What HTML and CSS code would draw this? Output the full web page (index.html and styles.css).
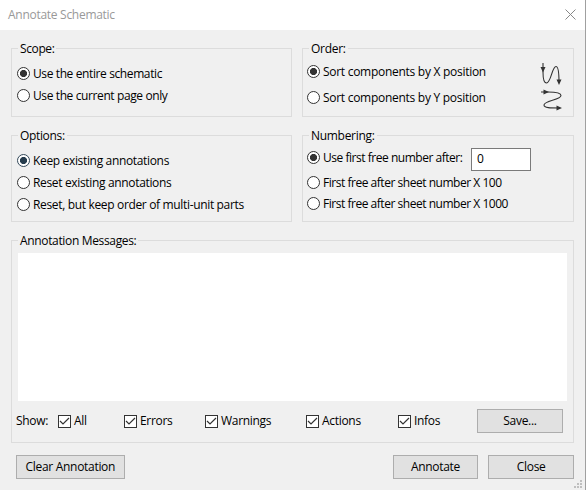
FILE: index.html
```html
<!DOCTYPE html>
<html lang="en">
<head>
<meta charset="utf-8">
<title>Annotate Schematic</title>
<link rel="stylesheet" href="styles.css">
</head>
<body>
<main class="dialog">
  <header class="titlebar">
    <h1>Annotate Schematic</h1>
    <svg class="close" width="11" height="11" viewBox="0 0 11 11"><path d="M.5 .5l10 10M10.5 .5l-10 10"/></svg>
  </header>
  <div class="content">
    <div class="columns">
      <section class="group scope">
        <h2>Scope:</h2>
        <div class="row"><i class="radio on"></i><span>Use the entire schematic</span></div>
        <div class="row"><i class="radio"></i><span>Use the current page only</span></div>
      </section>
      <section class="group order">
        <h2>Order:</h2>
        <div class="row"><i class="radio on"></i><span>Sort components by X position</span></div>
        <div class="row"><i class="radio"></i><span>Sort components by Y position</span></div>
        <svg class="arrows" width="24" height="50" viewBox="0 0 24 50">
          <path class="line" d="M3 1V10C3 17 4 21 6.500 21C11 21 12 4.500 16 4.500C18.500 4.500 19 10 19 20M1 30H8C16 30 21 30.500 21 33.500C21 38 4 38.500 4 43C4 46 10 46 20 46"/>
          <path d="M.5 5H5.500L3 10.500ZM16.500 17.500H21.500L19 23ZM3.500 27.500V32.500L9 30ZM16.500 43.500V48.500L22 46Z"/>
        </svg>
      </section>
    </div>
    <div class="columns second">
      <section class="group options">
        <h2>Options:</h2>
        <div class="row"><i class="radio on blue"></i><span>Keep existing annotations</span></div>
        <div class="row"><i class="radio"></i><span>Reset existing annotations</span></div>
        <div class="row"><i class="radio"></i><span>Reset, but keep order of multi-unit parts</span></div>
      </section>
      <section class="group numbering">
        <h2>Numbering:</h2>
        <div class="row first"><i class="radio on"></i><span>Use first free number after:</span><div class="field">0</div></div>
        <div class="row"><i class="radio"></i><span>First free after sheet number X 100</span></div>
        <div class="row"><i class="radio"></i><span>First free after sheet number X 1000</span></div>
      </section>
    </div>
    <section class="group messages">
      <h2>Annotation Messages:</h2>
      <div class="log"></div>
      <div class="filters">
        <span class="show">Show:</span>
        <div class="check"><svg width="13" height="13" viewBox="1 1 11 11"><path d="M2 6L5 9L11 3"/></svg><span>All</span></div>
        <div class="check"><svg width="13" height="13" viewBox="1 1 11 11"><path d="M2 6L5 9L11 3"/></svg><span>Errors</span></div>
        <div class="check"><svg width="13" height="13" viewBox="1 1 11 11"><path d="M2 6L5 9L11 3"/></svg><span>Warnings</span></div>
        <div class="check"><svg width="13" height="13" viewBox="1 1 11 11"><path d="M2 6L5 9L11 3"/></svg><span>Actions</span></div>
        <div class="check"><svg width="13" height="13" viewBox="1 1 11 11"><path d="M2 6L5 9L11 3"/></svg><span>Infos</span></div>
        <div class="button">Save...</div>
      </div>
    </section>
    <footer>
      <div class="button clear">Clear Annotation</div>
      <div class="button">Annotate</div>
      <div class="button">Close</div>
    </footer>
  </div>
  <svg class="grip" width="8" height="8" viewBox="0 0 8 8"><path d="M6 0h2v2h-2zM3 3h2v2h-2zM6 3h2v2h-2zM0 6h2v2h-2zM3 6h2v2h-2zM6 6h2v2h-2z"/></svg>
</main>
</body>
</html>
```
FILE: styles.css
```css
* { box-sizing: border-box; }
body { margin: 0; }
.dialog {
  position: relative;
  width: 586px;
  height: 490px;
  overflow: hidden;
  background: #f0f0f0;
  border-right: 1px solid #a0a0a0;
  color: #000;
  font: 12px/16px "Open Sans", "Noto Sans", sans-serif;
  letter-spacing: -0.3px;
  white-space: nowrap;
}
.titlebar {
  display: flex;
  justify-content: space-between;
  align-items: center;
  height: 30px;
  padding: 0 9px 2px 8px;
  background: #fff;
}
h1, h2 { margin: 0; font: inherit; }
h1 { padding-top: 2px; color: #999; letter-spacing: -0.28px; }
.close { fill: none; stroke: #888; }
.content { padding: 18px 11px 0; }
.columns { display: grid; grid-template-columns: 281px 272px; gap: 10px; height: 69px; }
.second { height: 87px; margin-top: 18px; }
.group {
  position: relative;
  display: flex;
  flex-direction: column;
  gap: 9px;
  border: 1px solid #dcdcdc;
  padding: 18px 5px 0;
}
.group h2 {
  position: absolute;
  top: -8px;
  left: 6px;
  padding: 0 2px;
  background: #f0f0f0;
}
.scope { letter-spacing: -0.39px; }
.options { letter-spacing: -0.34px; }
.order { gap: 13px; padding: 16px 4px 0; letter-spacing: -0.28px; }
.numbering { gap: 8px; padding: 15px 4px 0; }
.numbering .row { letter-spacing: -0.47px; }
.row { display: flex; align-items: center; gap: 3px; height: 13px; }
.first { margin-bottom: 4px; }
.radio {
  flex: none;
  width: 13px;
  height: 13px;
  border: 1px solid #333;
  border-radius: 50%;
  background: #fff;
}
.on { background: radial-gradient(circle, #333 3.2px, #fff 3.9px); }
.blue { border-color: #34495a; background: radial-gradient(circle, #263c4d 3.2px, #fff 3.9px); }
.arrows { position: absolute; left: 237px; top: 13px; fill: #333; }
.line { fill: none; stroke: #333; stroke-width: 1.1; }
.field {
  width: 60px;
  height: 23px;
  margin: 3px 0 0 auto;
  padding: 2px 5px;
  border: 1px solid #7a7a7a;
  background: #fff;
}
.first { width: 224px; }
.messages { height: 203px; margin-top: 18px; padding: 12px 5px 0 4px; gap: 8px; width: 563px; }
.messages h2 { letter-spacing: -0.34px; }
.log { flex: none; width: 549px; height: 148px; margin-left: 2px; background: #fff; }
.filters { display: grid; grid-template-columns: 42px 66px 81px 101px 92px 79px 86px; align-items: center; height: 24px; }
.check { display: flex; align-items: center; gap: 3px; }
.check svg { flex: none; border: 1px solid #333; background: #fff; }
.check path { fill: none; stroke: #333; stroke-width: 1.2; }
.button {
  width: 86px;
  height: 24px;
  border: 1px solid #adadad;
  background: #e1e1e1;
  text-align: center;
  line-height: 22px;
}
footer { display: flex; gap: 10px; margin: 12px 0 0 5px; }
.clear { width: 109px; margin-right: 258px; }
.grip { position: absolute; right: 3px; bottom: 2px; fill: #bfbfbf; }
```
